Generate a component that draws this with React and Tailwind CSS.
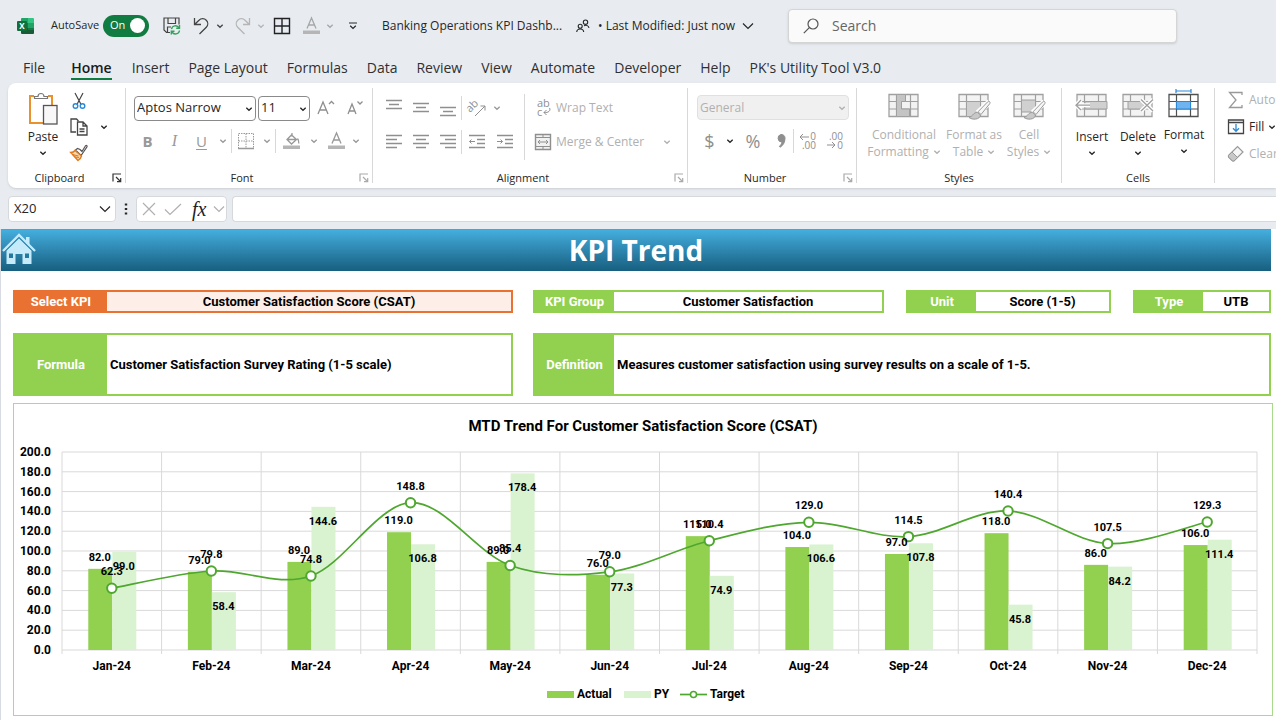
import { useState } from 'react'

const TABS = [
  'File', 'Home', 'Insert', 'Page Layout', 'Formulas', 'Data', 'Review',
  'View', 'Automate', 'Developer', 'Help', "PK's Utility Tool V3.0",
]

const MONTHS = [
  { name: 'Jan-24', actual: 82.0, py: 99.0, target: 62.3 },
  { name: 'Feb-24', actual: 79.0, py: 58.4, target: 79.8 },
  { name: 'Mar-24', actual: 89.0, py: 144.6, target: 74.8 },
  { name: 'Apr-24', actual: 119.0, py: 106.8, target: 148.8 },
  { name: 'May-24', actual: 89.0, py: 178.4, target: 85.4 },
  { name: 'Jun-24', actual: 76.0, py: 77.3, target: 79.0 },
  { name: 'Jul-24', actual: 115.0, py: 74.9, target: 110.4 },
  { name: 'Aug-24', actual: 104.0, py: 106.6, target: 129.0 },
  { name: 'Sep-24', actual: 97.0, py: 107.8, target: 114.5 },
  { name: 'Oct-24', actual: 118.0, py: 45.8, target: 140.4 },
  { name: 'Nov-24', actual: 86.0, py: 84.2, target: 107.5 },
  { name: 'Dec-24', actual: 106.0, py: 111.4, target: 129.3 },
]

function Svg({ w, h, className = '', children }) {
  return (
    <svg width={w} height={h} viewBox={`0 0 ${w} ${h}`} fill="none" stroke="currentColor" className={`shrink-0 overflow-visible ${className}`} aria-hidden="true">
      {children}
    </svg>
  )
}

function Chevron({ className = '' }) {
  return (
    <Svg w={8} h={8} className={className}>
      <path d="M1.3 2.7 4 5.3l2.7-2.6" strokeWidth="1.3" />
    </Svg>
  )
}

function BigChevron({ className = '' }) {
  return (
    <Svg w={12} h={8} className={className}>
      <path d="M1 1.5l5 5 5-5" strokeWidth="1.2" />
    </Svg>
  )
}

/* ---------- title bar ---------- */

function ExcelLogo() {
  return (
    <Svg w={18} h={18}>
      <g stroke="none">
        <path d="M5 1h6v5H4V2a1 1 0 0 1 1-1z" fill="#21a366" />
        <path d="M11 1h5a1 1 0 0 1 1 1v4h-6z" fill="#33c481" />
        <path d="M4 6h7v6H4z" fill="#107c41" />
        <path d="M11 6h6v5h-6z" fill="#21a366" />
        <path d="M4 11h13v5a1 1 0 0 1-1 1H5a1 1 0 0 1-1-1z" fill="#185c37" />
        <path d="M11 11h6v2h-6z" fill="#107c41" />
        <rect x="0" y="4" width="10" height="10" rx="1" fill="#0f703b" />
        <text x="5" y="12" fontSize="8" fontWeight="700" textAnchor="middle" fill="#fff">X</text>
      </g>
    </Svg>
  )
}

function SaveIcon() {
  return (
    <Svg w={18} h={18} className="text-[#444]">
      <path d="M7 15.5H3.5L1 13V1h15v6.5M5 1v5.5h7.5V1M4.5 15.5V10H8" strokeWidth="1.2" />
      <g stroke="#33a05c" strokeWidth="1.4">
        <path d="M8.5 12.2a4 4 0 0 1 7.5-1.2M16.5 8v3.3h-3.3" />
        <path d="M16.5 13.5a4 4 0 0 1-7.5 1.3M8.3 17.5v-3.2h3.2" />
      </g>
    </Svg>
  )
}

function UndoIcon({ className = '' }) {
  return (
    <Svg w={17} h={18} className={className}>
      <path d="M1.5 1v6.5H8M1.8 7.3 6 3.2a5 5 0 0 1 7.3 0 5 5 0 0 1 0 7L6.5 17" strokeWidth="1.3" />
    </Svg>
  )
}

function FontColorIcon() {
  return (
    <Svg w={17} h={18}>
      <path d="M4 11.5 8.5 1 13 11.5M5.5 8h6" strokeWidth="1.3" />
      <rect x="0" y="13.5" width="17" height="3.5" fill="#b5b5b5" stroke="none" />
    </Svg>
  )
}

function TitleBar() {
  const [autoSave, setAutoSave] = useState(true)
  return (
    <header className="flex h-[51px] items-center text-xs text-[#262626]">
      <div className="ml-[17px] mr-4"><ExcelLogo /></div>
      <label className="flex w-[98px] shrink-0 items-center justify-between text-[11px]">
        AutoSave
        <span className="relative flex h-[22px] w-[46px] items-center rounded-full bg-[#107c41] px-[7px] text-white">
          <input
            type="checkbox"
            role="switch"
            className="absolute inset-0 appearance-none"
            checked={autoSave}
            onChange={(e) => setAutoSave(e.target.checked)}
          />
          On
          <span className="absolute right-1 size-[15px] rounded-full bg-white" />
        </span>
      </label>
      <div className="flex shrink-0 items-center pl-[14px]">
        <button aria-label="Save"><SaveIcon /></button>
        <button aria-label="Undo" className="ml-3 flex items-center gap-1.5 text-[#444]"><UndoIcon /><Chevron /></button>
        <button aria-label="Redo" className="ml-2.5 flex items-center gap-1.5 text-[#b5b5b5]"><UndoIcon className="-scale-x-100" /><Chevron /></button>
        <button aria-label="Borders" className="ml-2 text-[#222]">
          <Svg w={18} h={18}><path d="M1.5 1.5h15v15h-15zM9 1.5v15M1.5 9h15" strokeWidth="1.4" /></Svg>
        </button>
        <button aria-label="Font color" className="ml-3 flex items-center gap-1.5 text-[#a6a6a6]">
          <FontColorIcon /><Chevron />
        </button>
        <button aria-label="Customize toolbar" className="ml-3.5">
          <Svg w={10} h={8}><path d="M1 1h8M2.2 3.8 5 6.5l2.8-2.7" strokeWidth="1.2" /></Svg>
        </button>
      </div>
      <button className="ml-6 flex shrink-0 items-center">
        <span className="w-[194px] text-left">Banking Operations KPI Dashb...</span>
        <Svg w={14} h={14}>
          <circle cx="9.5" cy="3.2" r="2.2" strokeWidth="1.1" />
          <path d="M8 6.8c2.5-1.2 4.5 0 5 2.2" strokeWidth="1.1" />
          <circle cx="4.2" cy="7.2" r="2" strokeWidth="1.1" />
          <path d="M.7 13c.3-4 6.7-4 7 0" strokeWidth="1.1" />
        </Svg>
        <span className="ml-2 w-[144px] text-left">• Last Modified: Just now</span>
        <BigChevron />
      </button>
      <label className="ml-[34px] flex h-[34px] w-[389px] shrink-0 items-center rounded border border-[#d5d5d5] bg-[#fafafa] shadow-sm">
        <Svg w={16} h={16} className="ml-[14px] text-[#555]">
          <circle cx="10" cy="6" r="5" strokeWidth="1.2" />
          <path d="M6.3 9.7.8 15.2" strokeWidth="1.2" />
        </Svg>
        <input aria-label="Search" placeholder="Search" className="ml-[13px] min-w-0 flex-1 bg-transparent text-sm outline-none placeholder:text-[#666]" />
      </label>
    </header>
  )
}

function RibbonTabs() {
  const [active, setActive] = useState('Home')
  return (
    <nav className="flex h-8 items-center gap-[19px] pl-[23px] text-sm whitespace-nowrap text-[#303030]">
      {TABS.map((tab) => (
        <button
          key={tab}
          onClick={() => setActive(tab)}
          className={`h-[26px] border-b-2 pt-1 leading-5 ${tab === active ? 'mr-px ml-[7px] border-[#107c41] font-semibold text-[#1a1a1a]' : 'border-transparent'}`}
        >
          {tab}
        </button>
      ))}
    </nav>
  )
}

/* ---------- ribbon icons ---------- */

function PasteIcon() {
  return (
    <Svg w={30} h={34}>
      <path d="M6 4H2v27h14M20 4h4v9" stroke="#e8912d" strokeWidth="2" />
      <path d="M6.5 6.5h13V4.500h-3.500a3 3 0 0 0-6 0H6.500z" fill="#fff" stroke="#777" strokeWidth="1.2" />
      <rect x="15.5" y="13.5" width="13.5" height="18.5" fill="#f8f8f8" stroke="#555" strokeWidth="1.3" />
    </Svg>
  )
}

function CutIcon() {
  return (
    <Svg w={14} h={18}>
      <path d="M3 1l5.8 11M11 1 5.2 12" stroke="#444" strokeWidth="1.2" />
      <circle cx="3.5" cy="14" r="2.3" stroke="#2b88d8" strokeWidth="1.4" />
      <circle cx="10.5" cy="14" r="2.3" stroke="#2b88d8" strokeWidth="1.4" />
    </Svg>
  )
}

function CopyIcon() {
  return (
    <Svg w={18} h={18} className="text-[#444]">
      <path d="M6 14H1V1h5.5l2 2" strokeWidth="1.3" />
      <path d="M7.5 4H13l4 4v9H7.5zM13 4v4h4M9.5 11h5M9.5 13.5h5" strokeWidth="1.3" />
    </Svg>
  )
}

function BrushIcon() {
  return (
    <Svg w={18} h={18}>
      <path d="M10 5.5 12 7.5 15.5 1.8c1-1 2.2.3 1.3 1.3L13.5 8 11 11.500 5.500 6l2-1.500z" fill="#fff" stroke="#555" strokeWidth="1.2" />
      <path d="M5 6.500c-1 1.500-2.500 2-4.300 2L8 16.500c1.500-1 3-2.500 3.500-4.500z" fill="#f9d9b0" stroke="#e07b1f" strokeWidth="1.4" />
      <path d="M2.500 10.500l6 1.500M5 13l4 .5" stroke="#e07b1f" strokeWidth="1.2" />
    </Svg>
  )
}

function LauncherIcon() {
  return (
    <Svg w={10} h={10}>
      <path d="M1 8.5V1h8M4 4l4.5 4.500M8.700 5v3.700H5" strokeWidth="1.2" />
    </Svg>
  )
}

/* Text rules, given as [x, width] per row. */
function LinesIcon({ rows, top = 2, step = 4, children }) {
  return (
    <Svg w={18} h={18} className="text-[#8f8f8f]">
      {rows.map(([x, width], i) => (
        <path key={i} d={`M${x} ${top + i * step + 0.5}h${width}`} strokeWidth="1.3" />
      ))}
      {children}
    </Svg>
  )
}

function DecimalIcon({ more }) {
  return (
    <Svg w={18} h={18} className="text-[#8f8f8f]">
      <g fill="currentColor" stroke="none" fontSize="10">
        <text x="17" y="8" textAnchor="end">{more ? '0' : '.00'}</text>
        <text x="17" y="17" textAnchor="end">{more ? '.00' : '0'}</text>
      </g>
      {more
        ? <path d="M10 5H1M4 2 1 5l3 3" />
        : <path d="M1 13h8M6 10l3 3-3 3" />}
    </Svg>
  )
}

function Grid({ blue, children }) {
  return (
    <Svg w={34} h={32} className={blue ? 'text-[#505050]' : 'text-[#a0a0a0]'}>
      <path d="M2 6.5h29v22H2z" fill={blue ? '#fff' : '#f3f3f3'} strokeWidth="1.3" />
      <path d="M2 13.5h29M2 21h29M9.5 6.5v22M23.5 6.5v22" strokeWidth="1.2" />
      {children}
    </Svg>
  )
}

function PaintBrush() {
  return (
    <>
      <path d="M32.5 14 21 25" stroke="#fff" strokeWidth="6" />
      <path d="M32.5 13.5c1 .8.5 1.8 0 2.5L24 26.500l-3-2.700 9.500-9.800c.6-.6 1.500-.9 2-.5z" fill="#f6f6f6" stroke="#999" />
      <path d="M20.5 24.5c-4-.5-4 3.5-8.5 5 3 2.500 11 2.500 11.500-2.500z" fill="#c8c8c8" stroke="#999" />
    </>
  )
}

/* ---------- ribbon ---------- */

function Group({ label, width, launcher, muted, children }) {
  return (
    <section aria-label={label} className={`flex shrink-0 flex-col border-r border-[#d8d8d8] ${width}`}>
      <div className="flex-1">{children}</div>
      <div className="-mb-[3px] flex h-4 items-center text-[11px] text-[#262626]">
        <span className="flex-1 text-center">{label}</span>
        {launcher && (
          <button aria-label={`${label} settings`} className={`mr-0.5 flex w-3 justify-center ${muted ? 'text-[#aaa]' : 'text-[#333]'}`}>
            <LauncherIcon />
          </button>
        )}
      </div>
    </section>
  )
}

function Divider({ className = 'h-6' }) {
  return <span className={`w-px shrink-0 bg-[#d8d8d8] ${className}`} />
}

function IconButton({ label, className = 'w-[27px]', children }) {
  return (
    <button aria-label={label} className={`flex h-[26px] shrink-0 items-center justify-center ${className}`}>
      {children}
    </button>
  )
}

function DropSelect({ label, value, className }) {
  return (
    <span className={`relative h-[25px] rounded border ${className}`}>
      <select aria-label={label} className="size-full appearance-none pl-0.5 outline-none" defaultValue={value}>
        <option>{value}</option>
      </select>
      <Chevron className="pointer-events-none absolute top-2 right-0.5" />
    </span>
  )
}

function BigButton({ icon, lines, className, muted, below }) {
  return (
    <button className={`flex shrink-0 flex-col items-center text-xs leading-[17px] ${muted ? 'text-[#b0b0b0]' : 'text-[#262626]'} ${className}`}>
      {icon}
      {lines.map((line, i) => (
        <span key={line} className="flex items-center gap-1 whitespace-nowrap">
          {line}
          {!below && i === lines.length - 1 && <Chevron />}
        </span>
      ))}
      {below && <Chevron className="mt-1" />}
    </button>
  )
}

function Ribbon() {
  return (
    <div className="ml-2 flex h-[105px] overflow-hidden rounded-l-lg bg-white py-[5px] text-xs text-[#262626] shadow">
      <Group label="Clipboard" width="w-[118px]" launcher>
        <div className="flex pl-[13px]">
          <BigButton className="w-[44px] pt-1" lines={['Paste']} below icon={<span className="mb-0.5 block h-[34px]"><PasteIcon /></span>} />
          <div className="flex flex-col">
            <IconButton label="Cut"><CutIcon /></IconButton>
            <IconButton label="Copy"><CopyIcon /></IconButton>
            <IconButton label="Format Painter"><BrushIcon /></IconButton>
          </div>
          <IconButton label="Copy options" className="mt-[26px] w-6"><Chevron /></IconButton>
        </div>
      </Group>

      <Group label="Font" width="w-[247px]" launcher muted>
        <div className="flex items-center gap-0.5 pt-[7px] pl-2 text-[13px]">
          <DropSelect label="Font" value="Aptos Narrow" className="w-[122px] border-[#8a8a8a]" />
          <DropSelect label="Font size" value="11" className="w-[52px] border-[#8a8a8a]" />
          <IconButton label="Increase font size">
            <Svg w={18} h={18} className="text-[#8f8f8f]"><path d="M1 15 6 3l5 12M2.7 11h6.600M12 5l2.500-2.500L17 5" strokeWidth="1.3" /></Svg>
          </IconButton>
          <IconButton label="Decrease font size">
            <Svg w={18} h={18} className="text-[#8f8f8f]"><path d="M2 15 6 5l4 10M3.5 12h5M11.500 2.500 14 5l2.500-2.500" strokeWidth="1.3" /></Svg>
          </IconButton>
        </div>
        <div className="flex items-center pt-[7px] pl-2 text-[15px] text-[#999]">
          <IconButton label="Bold"><b>B</b></IconButton>
          <IconButton label="Italic"><i className="font-['Liberation_Serif'] text-base">I</i></IconButton>
          <IconButton label="Underline"><u className="underline-offset-2">U</u></IconButton>
          <IconButton label="Underline options" className="w-4"><Chevron /></IconButton>
          <Divider />
          <IconButton label="Borders">
            <Svg w={18} h={18}><path d="M1.5 1.5h15v15h-15zM9 1.5v15M1.5 9h15" strokeDasharray="1.5 1" /><path d="M1 16.5h16" strokeWidth="1.5" /></Svg>
          </IconButton>
          <IconButton label="Border options" className="w-4"><Chevron /></IconButton>
          <Divider />
          <IconButton label="Fill color" className="w-8">
            <Svg w={18} h={18}>
              <path d="M9 1v3.500M4 7.500 8.500 3l5 4.500L8.500 12zM4 7.500h9.500M14.500 6.500c.8 1 1.500 3 1.300 5" strokeWidth="1.3" />
              <rect x="0" y="13.5" width="17" height="3.5" fill="#b5b5b5" stroke="none" />
            </Svg>
          </IconButton>
          <IconButton label="Fill options" className="w-3"><Chevron /></IconButton>
          <IconButton label="Font color" className="w-8"><FontColorIcon /></IconButton>
          <IconButton label="Font color options" className="w-2"><Chevron /></IconButton>
        </div>
      </Group>

      <Group label="Alignment" width="w-[315px]" launcher muted>
        <div className="flex">
          <div className="flex flex-col gap-2 pt-[7px] pl-[7px]">
            <div className="flex items-center">
              <IconButton label="Top align"><LinesIcon top={1} rows={[[1, 16], [4, 10], [1, 16]]} /></IconButton>
              <IconButton label="Middle align"><LinesIcon top={4} rows={[[1, 16], [4, 10], [1, 16]]} /></IconButton>
              <IconButton label="Bottom align"><LinesIcon top={8} rows={[[1, 16], [4, 10], [1, 16]]} /></IconButton>
              <Divider />
              <IconButton label="Orientation" className="w-[29px]">
                <Svg w={20} h={18} className="text-[#8f8f8f]">
                  <text x="3" y="14" fontSize="11" fill="currentColor" stroke="none" transform="rotate(-45 3 14)">ab</text>
                  <path d="M8 17 18 7M13.500 7H18v4.500" />
                </Svg>
              </IconButton>
              <IconButton label="Orientation options" className="w-3 text-[#999]"><Chevron /></IconButton>
            </div>
            <div className="flex items-center">
              <IconButton label="Align left"><LinesIcon rows={[[1, 16], [1, 11], [1, 16], [1, 11]]} /></IconButton>
              <IconButton label="Center"><LinesIcon rows={[[1, 16], [4, 10], [1, 16], [4, 10]]} /></IconButton>
              <IconButton label="Align right"><LinesIcon rows={[[1, 16], [6, 11], [1, 16], [6, 11]]} /></IconButton>
              <Divider />
              <IconButton label="Decrease indent" className="w-[29px]">
                <LinesIcon rows={[[1, 16], [9, 8], [9, 8], [1, 16]]}><path d="M7 8.5H1.5M3.5 6.5l-2 2 2 2" /></LinesIcon>
              </IconButton>
              <IconButton label="Increase indent">
                <LinesIcon rows={[[1, 16], [9, 8], [9, 8], [1, 16]]}><path d="M1 8.5h5.5M4.500 6.500l2 2-2 2" /></LinesIcon>
              </IconButton>
            </div>
          </div>
          <Divider className="mt-1.5 ml-1.5 h-[66px]" />
          <div className="flex flex-1 flex-col gap-2 pt-[7px] pl-[9px] text-[#b0b0b0]">
            <button className="flex h-[26px] items-center gap-1">
              <Svg w={18} h={18} className="text-[#8f8f8f]">
                <g fill="currentColor" stroke="none" fontSize="11"><text x="3" y="8">ab</text><text x="3" y="17">c</text></g>
                <path d="M15.5 9c1.500 2.500-1 5-5.500 4.500M12.500 11 10 13.500l2.500 2.500" />
              </Svg>
              Wrap Text
            </button>
            <button className="flex h-[26px] items-center gap-1">
              <Svg w={18} h={18} className="text-[#8f8f8f]">
                <path d="M1.5 1.5h15v15h-15z" fill="#f1f1f1" strokeWidth="1.4" />
                <path d="M1.5 4.5h15M1.5 13.5h15M9 1.5v3M9 13.5v3M4 9h10M6 7 4 9l2 2M12 7l2 2-2 2" />
              </Svg>
              Merge &amp; Center
              <Chevron className="mr-4 ml-auto" />
            </button>
          </div>
        </div>
      </Group>

      <Group label="Number" width="w-[169px]" launcher muted>
        <div className="flex pt-[7px] pl-[9px]">
          <DropSelect label="Number format" value="General" className="w-[152px] border-[#e0e0e0] bg-[#f0f0f0] text-[#b0b0b0]" />
        </div>
        <div className="flex items-center pt-2 pl-2 text-lg text-[#8f8f8f]">
          <IconButton label="Currency">$</IconButton>
          <IconButton label="Currency options" className="w-3.5 text-[#262626]"><Chevron /></IconButton>
          <IconButton label="Percent" className="w-8">%</IconButton>
          <IconButton label="Comma style" className="w-6">
            <Svg w={10} h={16}><path d="M5 1.500a3.500 3.500 0 0 1 4 3.700c0 4-2 7.500-5 9l-.7-.8C5 12 6 10.500 6 9A3.800 3.800 0 0 1 5 1.500z" fill="currentColor" /></Svg>
          </IconButton>
          <Divider />
          <IconButton label="Increase decimal"><DecimalIcon more /></IconButton>
          <IconButton label="Decrease decimal"><DecimalIcon /></IconButton>
        </div>
      </Group>

      <Group label="Styles" width="w-[205px]">
        <div className="flex">
          <BigButton
            className="ml-2 w-[78px]"
            muted
            lines={['Conditional', 'Formatting']}
            icon={<span className="mb-1.5"><Grid><path d="M9.5 6.5h9v7h-4V21h8v7.500h-13z" fill="#c4c4c4" /></Grid></span>}
          />
          <BigButton
            className="w-[62px]"
            muted
            lines={['Format as', 'Table']}
            icon={<span className="mb-1.5"><Grid><path d="M9.5 13.5h14v15h-14z" fill="#d0d0d0" /><PaintBrush /></Grid></span>}
          />
          <BigButton
            className="w-12"
            muted
            lines={['Cell', 'Styles']}
            icon={<span className="mb-1.5"><Grid><path d="M9.5 12h14v12h-14z" fill="#d0d0d0" /><PaintBrush /></Grid></span>}
          />
        </div>
      </Group>

      <Group label="Cells" width="w-[153px]">
        <div className="flex pl-[7px]">
          <BigButton
            className="w-[46px]"
            lines={['Insert']}
            below
            icon={<span className="mb-2"><Grid><path d="M10 13.5h22V21H10z" fill="#d0d0d0" /><path d="M15 17.2H1M6 12l-5 5.2L6 22" stroke="#fff" strokeWidth="4" /><path d="M15 17.2H1M6 12l-5 5.2L6 22" strokeWidth="1.3" /></Grid></span>}
          />
          <BigButton
            className="w-[46px]"
            lines={['Delete']}
            below
            icon={<span className="mb-2"><Grid><path d="M7 13.5h16V21H7z" fill="#d0d0d0" /><path d="M20 11.5 32 23M32 11.5 20 23" stroke="#fff" strokeWidth="4" /><path d="M20 11.5 32 23M32 11.5 20 23" strokeWidth="1.3" /></Grid></span>}
          />
          <BigButton
            className="w-[46px]"
            lines={['Format']}
            below
            icon={<span className="mb-1.5"><Grid blue><path d="M9.5 13.5h14V21h-14z" fill="#6fb4ee" stroke="#2b88d8" /><path d="M9 3h15M9 1v4M24 1v4" stroke="#2b88d8" strokeWidth="1.2" /></Grid></span>}
          />
        </div>
      </Group>

      <div className="-mt-0.5 flex shrink-0 flex-col pl-3 whitespace-nowrap">
        <button className="flex h-[27px] items-center gap-1 text-[#b0b0b0]">
          <Svg w={18} h={18} className="text-[#999]"><path d="M15 4V1.5H2.5L9 9l-6.500 7.500H15V14" strokeWidth="1.3" /></Svg>
          AutoSum
        </button>
        <button className="flex h-[27px] items-center gap-1">
          <Svg w={18} h={18}>
            <path d="M1.5 2h15v13.5h-15zM1.5 4.500h15" stroke="#444" strokeWidth="1.3" />
            <path d="M9 6v7M6 10.3l3 3 3-3" stroke="#2b88d8" strokeWidth="1.3" />
          </Svg>
          Fill <Chevron />
        </button>
        <button className="flex h-[27px] items-center gap-1 text-[#b0b0b0]">
          <Svg w={18} h={18} className="text-[#999]">
            <path d="M1.5 10.5 10.5 1.500 16 7l-9 9H5.500l-4-4z" fill="#f6f6f6" strokeWidth="1.2" />
            <path d="M1.5 10.5 5 7l5.500 5.500L7 16H5.500l-4-4z" fill="#c8c8c8" />
          </Svg>
          Clear
        </button>
      </div>
    </div>
  )
}

function FormulaBar() {
  const box = 'flex h-[26px] items-center rounded border border-[#d6d9dc] bg-white'
  return (
    <div className="flex items-center pt-2 pb-[7px] pl-2 text-[13px] text-[#262626]">
      <div className={`${box} w-[108px] pr-1`}>
        <input aria-label="Name box" defaultValue="X20" className="min-w-0 flex-1 bg-transparent pl-[5px] outline-none" />
        <button aria-label="Named ranges"><BigChevron /></button>
      </div>
      <Svg w={4} h={14} className="mx-2">
        <path d="M2 1.5v2M2 6v2M2 10.5v2" strokeWidth="2.4" />
      </Svg>
      <div className={`${box} w-[91px] justify-between pr-px pl-1 text-[#b0b0b0]`}>
        <button aria-label="Cancel"><Svg w={16} h={14}><path d="M2 1l12 12M14 1 2 13" strokeWidth="1.2" /></Svg></button>
        <button aria-label="Enter"><Svg w={18} h={14}><path d="M1 7.5 6 12.500 17 2" strokeWidth="1.2" /></Svg></button>
        <button aria-label="Insert function" className="pl-1 font-['Liberation_Serif'] text-xl leading-5 text-[#222] italic">fx</button>
        <button aria-label="Function options"><BigChevron /></button>
      </div>
      <input aria-label="Formula" className={`${box} ml-[5px] min-w-0 flex-1 rounded-r-none border-r-0 px-2 outline-none`} />
    </div>
  )
}

/* ---------- sheet ---------- */

function Banner() {
  return (
    <div className="mr-[5px] flex h-[42px] items-center bg-linear-to-b from-[#45b0e1] to-[#175f80] shadow-[inset_0_1px_0_#5b9fbd]">
      <a href="#home" aria-label="Home" className="w-9 text-[#c5ebfb]">
        <Svg w={36} h={36}>
          <g fill="currentColor" stroke="none">
            <path d="M25 5h3.5v9L25 11z" />
            <path d="M18 6.500 5.500 18.500V32h9V22h7v10h9V18.500z" />
          </g>
          <path d="M2 19 18 3l16 16" strokeWidth="2.4" />
          <path d="M2.5 21 18 5.500 33.500 21" stroke="#2b86b0" strokeWidth="1" />
          <path d="M8 21.500h4V26H8zM24 21.500h4V26h-4z" fill="#22789f" stroke="none" />
        </Svg>
      </a>
      <h1 className="flex-1 pr-9 text-center text-[28px] leading-9 font-bold text-white">KPI Trend</h1>
    </div>
  )
}

function Field({ label, labelWidth, value, tall }) {
  return (
    <dl className={`flex items-stretch border-2 border-[#92d050] ${tall ? 'h-[63px]' : 'h-[23px]'}`}>
      <dt className={`flex shrink-0 items-center justify-center bg-[#92d050] text-white ${labelWidth}`}>{label}</dt>
      <dd className={`flex flex-1 items-center bg-white text-black ${tall ? 'pl-[3px]' : 'justify-center'}`}>{value}</dd>
    </dl>
  )
}

function Details() {
  return (
    <div className="grid grid-cols-[500fr_738fr] gap-5 pt-[19px] pr-[5px] pl-3 font-['Roboto'] text-[13px] leading-[19px] font-bold">
      <div className="flex h-[23px] border-2 border-[#e97132]">
        <label htmlFor="kpi" className="flex w-[92px] shrink-0 items-center justify-center bg-[#e97132] text-white">Select KPI</label>
        <select id="kpi" className="min-w-0 flex-1 appearance-none bg-[#fdeee7] text-center text-black outline-none">
          <option>Customer Satisfaction Score (CSAT)</option>
        </select>
      </div>
      <div className="grid grid-cols-[351fr_205fr_138fr] gap-x-[22px]">
        <Field label="KPI Group" labelWidth="w-[79px]" value="Customer Satisfaction" />
        <Field label="Unit" labelWidth="w-[68px]" value="Score (1-5)" />
        <Field label="Type" labelWidth="w-[68px]" value="UTB" />
      </div>
      <Field tall label="Formula" labelWidth="w-[92px]" value="Customer Satisfaction Survey Rating (1-5 scale)" />
      <Field tall label="Definition" labelWidth="w-[79px]" value="Measures customer satisfaction using survey results on a scale of 1-5." />
    </div>
  )
}

const PLOT = { left: 48, top: 48, width: 1195, height: 198 }
const STEP = PLOT.width / MONTHS.length
const BAR = 24

const yOf = (value) => PLOT.top + PLOT.height * (1 - value / 200)
const xOf = (i) => PLOT.left + STEP * (i + 0.5)

function smoothPath(points) {
  let d = `M${points[0][0]} ${points[0][1]}`
  for (let i = 0; i < points.length - 1; i++) {
    const a = points[i - 1] || points[i]
    const b = points[i]
    const c = points[i + 1]
    const e = points[i + 2] || c
    d += ` C${b[0] + (c[0] - a[0]) / 6} ${b[1] + (c[1] - a[1]) / 6} ${c[0] - (e[0] - b[0]) / 6} ${c[1] - (e[1] - b[1]) / 6} ${c[0]} ${c[1]}`
  }
  return d
}

function TrendChart() {
  const ticks = Array.from({ length: 11 }, (_, i) => i * 20)
  const bottom = PLOT.top + PLOT.height
  const points = MONTHS.map((m, i) => [xOf(i), yOf(m.target)])

  return (
    <figure className="mt-[7px] mr-[3px] ml-3 border border-[#a9d98a]">
      <svg viewBox="0 0 1258 311" className="block w-full font-['Roboto'] font-bold" role="img" aria-label="MTD trend by month">
        <text x="629" y="27" fontSize="15" textAnchor="middle">MTD Trend For Customer Satisfaction Score (CSAT)</text>

        <g stroke="#d9d9d9">
          {ticks.map((t) => (
            <path key={t} d={`M${PLOT.left} ${yOf(t)}h${PLOT.width}`} />
          ))}
          {Array.from({ length: MONTHS.length + 1 }, (_, i) => (
            <path key={i} d={`M${PLOT.left + STEP * i} ${PLOT.top}v${PLOT.height + 4}`} />
          ))}
        </g>
        <g fontSize="12" textAnchor="end">
          {ticks.map((t) => (
            <text key={t} x="37" y={yOf(t) + 4}>{t.toFixed(1)}</text>
          ))}
        </g>

        {MONTHS.map((m, i) => (
          <g key={m.name}>
            <rect x={xOf(i) - BAR + 0.5} y={yOf(m.actual)} width={BAR} height={bottom - yOf(m.actual)} fill="#92d050" />
            <rect x={xOf(i) + 0.5} y={yOf(m.py)} width={BAR} height={bottom - yOf(m.py)} fill="#d9f2d0" />
            <text x={xOf(i)} y={bottom + 20} fontSize="12" textAnchor="middle">{m.name}</text>
          </g>
        ))}

        <path d={smoothPath(points)} fill="none" stroke="#4ea72e" strokeWidth="1.7" />
        {points.map(([x, y], i) => (
          <circle key={i} cx={x} cy={y} r="4.7" fill="#fff" stroke="#4ea72e" strokeWidth="2" />
        ))}

        <g fontSize="11" textAnchor="middle">
          {MONTHS.map((m, i) => (
            <g key={m.name}>
              <text x={xOf(i) - BAR / 2} y={yOf(m.actual) - 8}>{m.actual.toFixed(1)}</text>
              <text x={xOf(i) + BAR / 2} y={yOf(m.py) + 18}>{m.py.toFixed(1)}</text>
              <text x={xOf(i)} y={yOf(m.target) - 13}>{m.target.toFixed(1)}</text>
            </g>
          ))}
        </g>

        <g fontSize="12">
          <path d="M533 287h27v7h-27z" fill="#92d050" />
          <text x="563" y="294">Actual</text>
          <path d="M610 287h27v7h-27z" fill="#d9f2d0" />
          <text x="640" y="294">PY</text>
          <path d="M666 290.5h27" stroke="#4ea72e" strokeWidth="1.7" />
          <circle cx="679.5" cy="290.5" r="3" fill="#fff" stroke="#4ea72e" strokeWidth="1.5" />
          <text x="696" y="294">Target</text>
        </g>
      </svg>
    </figure>
  )
}

export default function App() {
  return (
    <div className="min-h-screen overflow-x-hidden bg-[#e8ecf1] font-['Open_Sans','Noto_Sans',sans-serif]">
      <TitleBar />
      <RibbonTabs />
      <Ribbon />
      <FormulaBar />
      <main className="border-l border-[#d8dbe2] bg-white pb-1">
        <Banner />
        <Details />
        <TrendChart />
      </main>
    </div>
  )
}
